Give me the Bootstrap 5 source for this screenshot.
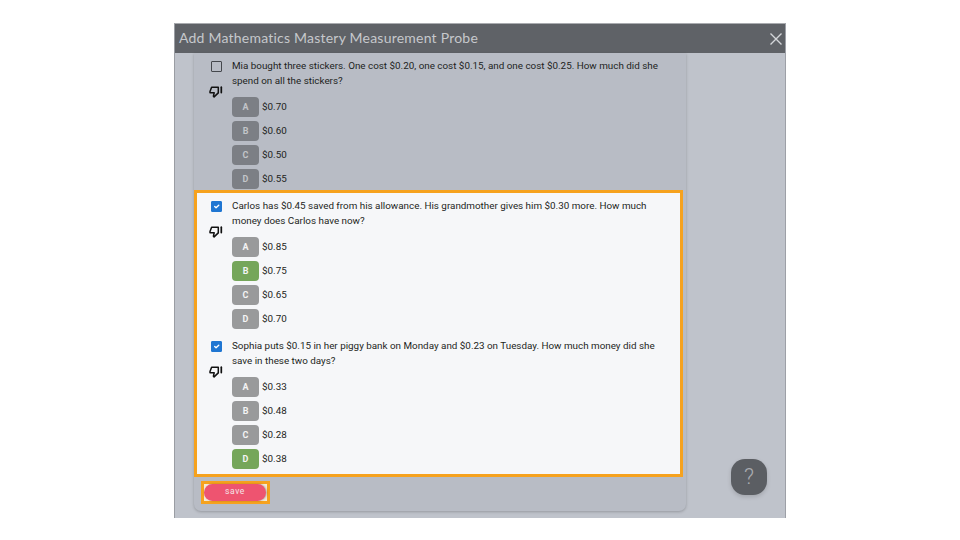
<!DOCTYPE html>
<html lang="en">
<head>
<meta charset="utf-8">
<title>Add Mathematics Mastery Measurement Probe</title>
<link href="https://cdn.jsdelivr.net/npm/bootstrap@5.3.0/dist/css/bootstrap.min.css" rel="stylesheet">
<style>
html,body{height:100%;background:#fff;overflow:hidden}
body{font-family:Roboto,"Liberation Sans",sans-serif;font-size:9.85px;color:#222}
.probe-modal{position:relative;width:612px;height:495px;margin:23px 0 0 174px;background:#bfc3cb;border-top:1px solid #a9abaf;border-left:1px solid #9a9da3;border-right:1px solid #9da0a7}
.probe-head{height:29px;background:#5f6267;color:#c6c8cc;padding:0 2px 2px 4px}
.probe-title{font-family:Lato,sans-serif;font-size:14px;letter-spacing:.22px;white-space:nowrap}
.probe-close{width:14px;height:14px;display:block;margin-top:2px}
.probe-card{width:492px;height:458px;margin-left:19px;background:#b8bcc5;border-radius:0 0 7px 7px;box-shadow:0 1px 3px rgba(0,0,0,.22);padding-top:5px}
.probe-q{height:131px;color:#1d1f22}
.probe-side{width:38px;padding-left:16px;flex:none}
.probe-sel .probe-side{width:35px;padding-left:13px}
.form-check-input.probe-check{width:11px;height:11px;margin:3px 0 0 1px;display:block;border-radius:1px;border:1.5px solid #44474c;background-color:transparent;box-shadow:none}
.form-check-input.probe-check:checked{background-color:#1f76d2;border-color:#1f76d2;opacity:1}
.probe-thumb{display:block;width:14px;height:12px;margin:14px 0 0 -1px}
.probe-text{line-height:15px;height:39px;white-space:nowrap}
.probe-opt{height:20px;margin-bottom:4px;line-height:19px}
.probe-letter{width:27px;height:20px;border-radius:4px;margin-right:3px;font-weight:700;font-size:9px;background:#7c7f85;color:#c3c5c9;flex:none}
.probe-sel{width:489px;height:287px;margin-top:1px;background:#f6f7f9;border:3px solid #f6a21e;padding-top:5px}
.probe-sel .probe-q{margin-bottom:9px}
.probe-sel .probe-letter{background:#999a9b;color:#f4f4f4}
.probe-sel .probe-letter.is-right{background:#75a65a}
.probe-savebox{width:69px;height:23px;margin:4px 0 0 7px;border:3px solid #f6a21e;background:#f4ead6}
.probe-save{width:62px;height:17px;padding:0 0 3px;border:0;border-radius:9px;background:#ee5470;color:#f3e3e6;font-size:8.5px;letter-spacing:.6px;line-height:14px;box-shadow:1px 0 2px rgba(0,0,0,.25)}
.probe-help{position:absolute;left:556px;top:435px;width:36px;height:36px;border-radius:14px;background:#5b5e63;color:#a9abb0;font-size:22px;font-weight:300;line-height:36px;text-align:center;box-shadow:0 2px 4px rgba(0,0,0,.15)}
</style>
</head>
<body>
<svg width="0" height="0" class="d-block" aria-hidden="true"><defs>
<g id="thumbdown" fill="none" stroke="#111" stroke-width="1.5" stroke-linejoin="round" stroke-linecap="round"><path d="M9.3 1.2H2.6L1 5.6v1.2h4.2L4.4 10.2l.7.7L9.3 6.9z"/><path d="M12.3 1.2v5.4" stroke-width="1.7"/></g>
</defs></svg>
<div class="probe-modal">
  <div class="probe-head d-flex align-items-center justify-content-between">
    <span class="probe-title">Add Mathematics Mastery Measurement Probe</span>
    <svg class="probe-close" viewBox="0 0 14 14" aria-label="close"><path d="M1.5 1.5l11 11M12.5 1.5l-11 11" stroke="#d4d6d9" stroke-width="1.4" fill="none"/></svg>
  </div>
  <div class="probe-card">
    <div class="probe-q d-flex">
      <div class="probe-side"><input class="form-check-input probe-check" type="checkbox" aria-label="select"><svg class="probe-thumb" viewBox="0 0 14 12"><use href="#thumbdown"/></svg></div>
      <div class="flex-grow-1">
        <div class="probe-text">Mia bought three stickers. One cost $0.20, one cost $0.15, and one cost $0.25. How much did she<br>spend on all the stickers?</div>
        <div class="probe-opt d-flex"><span class="probe-letter d-flex align-items-center justify-content-center">A</span>$0.70</div>
        <div class="probe-opt d-flex"><span class="probe-letter d-flex align-items-center justify-content-center">B</span>$0.60</div>
        <div class="probe-opt d-flex"><span class="probe-letter d-flex align-items-center justify-content-center">C</span>$0.50</div>
        <div class="probe-opt d-flex"><span class="probe-letter d-flex align-items-center justify-content-center">D</span>$0.55</div>
      </div>
    </div>
    <div class="probe-sel">
      <div class="probe-q d-flex">
        <div class="probe-side"><input class="form-check-input probe-check" type="checkbox" checked aria-label="select"><svg class="probe-thumb" viewBox="0 0 14 12"><use href="#thumbdown"/></svg></div>
        <div class="flex-grow-1">
          <div class="probe-text">Carlos has $0.45 saved from his allowance. His grandmother gives him $0.30 more. How much<br>money does Carlos have now?</div>
          <div class="probe-opt d-flex"><span class="probe-letter d-flex align-items-center justify-content-center">A</span>$0.85</div>
          <div class="probe-opt d-flex"><span class="probe-letter is-right d-flex align-items-center justify-content-center">B</span>$0.75</div>
          <div class="probe-opt d-flex"><span class="probe-letter d-flex align-items-center justify-content-center">C</span>$0.65</div>
          <div class="probe-opt d-flex"><span class="probe-letter d-flex align-items-center justify-content-center">D</span>$0.70</div>
        </div>
      </div>
      <div class="probe-q d-flex">
        <div class="probe-side"><input class="form-check-input probe-check" type="checkbox" checked aria-label="select"><svg class="probe-thumb" viewBox="0 0 14 12"><use href="#thumbdown"/></svg></div>
        <div class="flex-grow-1">
          <div class="probe-text">Sophia puts $0.15 in her piggy bank on Monday and $0.23 on Tuesday. How much money did she<br>save in these two days?</div>
          <div class="probe-opt d-flex"><span class="probe-letter d-flex align-items-center justify-content-center">A</span>$0.33</div>
          <div class="probe-opt d-flex"><span class="probe-letter d-flex align-items-center justify-content-center">B</span>$0.48</div>
          <div class="probe-opt d-flex"><span class="probe-letter d-flex align-items-center justify-content-center">C</span>$0.28</div>
          <div class="probe-opt d-flex"><span class="probe-letter is-right d-flex align-items-center justify-content-center">D</span>$0.38</div>
        </div>
      </div>
    </div>
    <div class="probe-savebox"><button type="button" class="btn probe-save d-block">save</button></div>
  </div>
  <div class="probe-help">?</div>
</div>
<script src="https://cdn.jsdelivr.net/npm/bootstrap@5.3.0/dist/js/bootstrap.bundle.min.js"></script>
</body>
</html>
